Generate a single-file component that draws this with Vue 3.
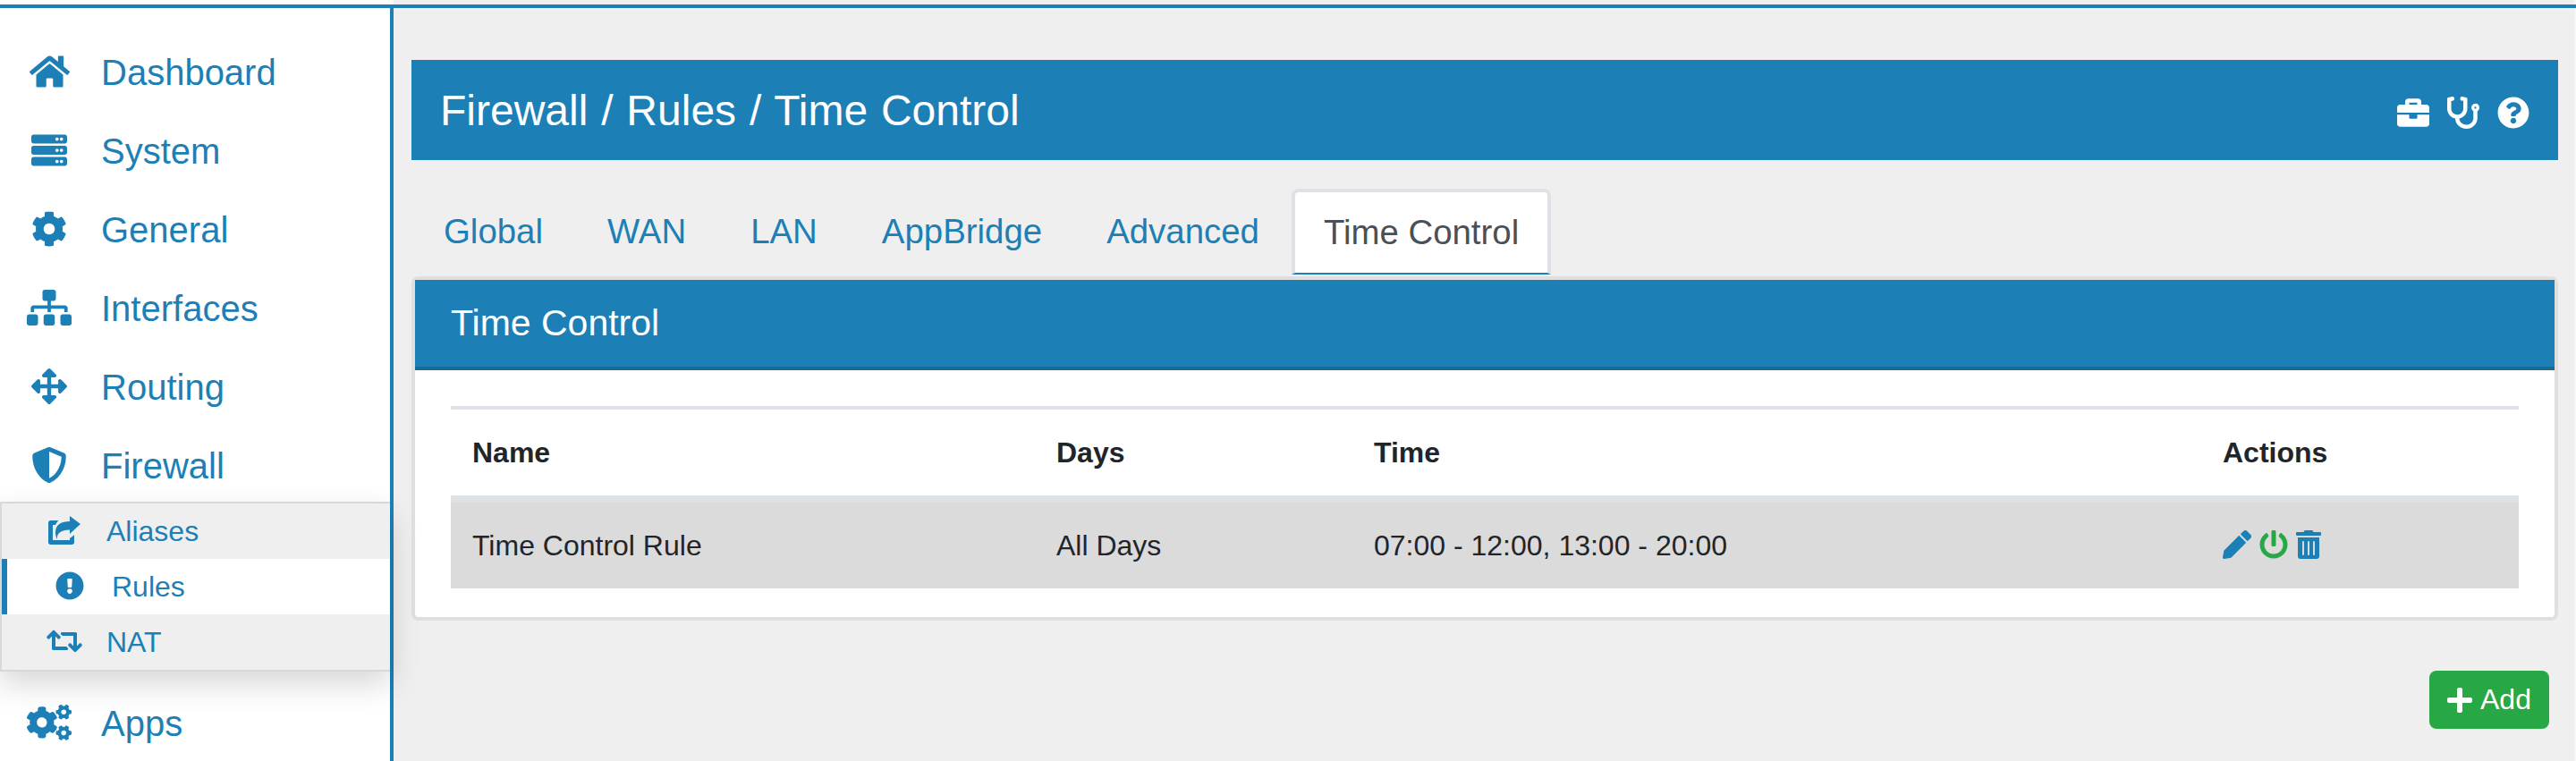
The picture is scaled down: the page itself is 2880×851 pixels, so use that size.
<script setup>
const paths = {
  home: { w: 576, d: ['M280.37 148.26L96 300.11V464a16 16 0 0 0 16 16l112.06-.29a16 16 0 0 0 15.92-16V368a16 16 0 0 1 16-16h64a16 16 0 0 1 16 16v95.64a16 16 0 0 0 16 16.05L464 480a16 16 0 0 0 16-16V300L295.67 148.26a12.19 12.19 0 0 0-15.3 0zM571.6 251.47L488 182.56V44.05a12 12 0 0 0-12-12h-56a12 12 0 0 0-12 12v72.61L318.47 43a48 48 0 0 0-61 0L4.34 251.47a12 12 0 0 0-1.6 16.9l25.5 31A12 12 0 0 0 45.15 301l235.22-193.74a12.19 12.19 0 0 1 15.3 0L530.9 301a12 12 0 0 0 16.9-1.6l25.5-31a12 12 0 0 0-1.7-16.93z'] },
  server: { w: 512, d: ['M480 160H32c-17.673 0-32-14.327-32-32V64c0-17.673 14.327-32 32-32h448c17.673 0 32 14.327 32 32v64c0 17.673-14.327 32-32 32zm-48-88c-13.255 0-24 10.745-24 24s10.745 24 24 24 24-10.745 24-24-10.745-24-24-24zm-64 0c-13.255 0-24 10.745-24 24s10.745 24 24 24 24-10.745 24-24-10.745-24-24-24zm112 248H32c-17.673 0-32-14.327-32-32v-64c0-17.673 14.327-32 32-32h448c17.673 0 32 14.327 32 32v64c0 17.673-14.327 32-32 32zm-48-88c-13.255 0-24 10.745-24 24s10.745 24 24 24 24-10.745 24-24-10.745-24-24-24zm-64 0c-13.255 0-24 10.745-24 24s10.745 24 24 24 24-10.745 24-24-10.745-24-24-24zm112 248H32c-17.673 0-32-14.327-32-32v-64c0-17.673 14.327-32 32-32h448c17.673 0 32 14.327 32 32v64c0 17.673-14.327 32-32 32zm-48-88c-13.255 0-24 10.745-24 24s10.745 24 24 24 24-10.745 24-24-10.745-24-24-24zm-64 0c-13.255 0-24 10.745-24 24s10.745 24 24 24 24-10.745 24-24-10.745-24-24-24z'] },
  cog: { w: 512, d: ['M487.4 315.7l-42.6-24.6c4.3-23.2 4.3-47 0-70.2l42.6-24.6c4.9-2.8 7.1-8.6 5.5-14-11.1-35.6-30-67.8-54.7-94.6-3.8-4.1-10-5.1-14.8-2.3L380.8 110c-17.9-15.4-38.5-27.3-60.8-35.1V25.8c0-5.6-3.9-10.5-9.4-11.7-36.7-8.2-74.3-7.8-109.2 0-5.5 1.2-9.4 6.1-9.4 11.7V75c-22.2 7.9-42.8 19.8-60.8 35.1L88.7 85.5c-4.9-2.8-11-1.9-14.8 2.3-24.7 26.7-43.6 58.9-54.7 94.6-1.7 5.4.6 11.2 5.5 14L67.3 221c-4.3 23.2-4.3 47 0 70.2l-42.6 24.6c-4.9 2.8-7.1 8.6-5.5 14 11.1 35.6 30 67.8 54.7 94.6 3.8 4.1 10 5.1 14.8 2.3l42.6-24.6c17.9 15.4 38.5 27.3 60.8 35.1v49.2c0 5.6 3.9 10.5 9.4 11.7 36.7 8.2 74.3 7.8 109.2 0 5.5-1.2 9.4-6.1 9.4-11.7v-49.2c22.2-7.9 42.8-19.8 60.8-35.1l42.6 24.6c4.9 2.8 11 1.9 14.8-2.3 24.7-26.7 43.6-58.9 54.7-94.6 1.5-5.5-.7-11.3-5.6-14.1zM256 336c-44.1 0-80-35.9-80-80s35.9-80 80-80 80 35.9 80 80-35.9 80-80 80z'] },
  sitemap: { w: 640, d: ['M128 352H32c-17.67 0-32 14.33-32 32v96c0 17.67 14.33 32 32 32h96c17.67 0 32-14.33 32-32v-96c0-17.67-14.33-32-32-32zm-24-80h192v48h48v-48h192v48h48v-57.59c0-21.17-17.23-38.41-38.41-38.41H344v-64h40c17.67 0 32-14.33 32-32V32c0-17.67-14.33-32-32-32H256c-17.67 0-32 14.33-32 32v96c0 17.67 14.33 32 32 32h40v64H94.41C73.23 224 56 241.23 56 262.41V320h48v-48zm264 80h-96c-17.67 0-32 14.33-32 32v96c0 17.67 14.33 32 32 32h96c17.67 0 32-14.33 32-32v-96c0-17.67-14.33-32-32-32zm240 0h-96c-17.67 0-32 14.33-32 32v96c0 17.67 14.33 32 32 32h96c17.67 0 32-14.33 32-32v-96c0-17.67-14.33-32-32-32z'] },
  arrows: { w: 512, d: ['M352.201 425.775l-79.196 79.196c-9.373 9.373-24.568 9.373-33.941 0l-79.196-79.196c-15.119-15.119-4.411-40.971 16.971-40.97h51.162L228 284H127.196v51.162c0 21.382-25.851 32.09-40.971 16.971L7.029 272.937c-9.373-9.373-9.373-24.569 0-33.941L86.225 159.8c15.119-15.119 40.971-4.411 40.971 16.971V228H228V127.196h-51.23c-21.382 0-32.09-25.851-16.971-40.971l79.196-79.196c9.373-9.373 24.568-9.373 33.941 0l79.196 79.196c15.119 15.119 4.411 40.971-16.971 40.971h-51.162V228h100.804v-51.162c0-21.382 25.851-32.09 40.97-16.971l79.196 79.196c9.373 9.373 9.373 24.569 0 33.941L425.773 352.2c-15.119 15.119-40.971 4.411-40.97-16.971V284H284v100.804h51.23c21.382 0 32.09 25.851 16.971 40.971z'] },
  shield: { w: 512, d: ['M466.5 83.7l-192-80a48.15 48.15 0 0 0-36.9 0l-192 80C27.7 91.1 16 108.6 16 128c0 198.5 114.5 335.7 221.5 380.3 11.8 4.9 25.1 4.9 36.9 0C360.1 472.6 496 349.3 496 128c0-19.4-11.7-36.9-29.5-44.3zM256.1 446.3l-.1-381 175.9 73.3c-3.3 151.4-82.1 261.1-175.8 307.7z'] },
  share: { w: 576, d: ['M576 144L384 0V96C240 96 128 150 128 290C128 340 140 380 160 416C150 330 200 250 384 248V320Z', 'M40 80C18 80 0 98 0 120V472C0 494 18 512 40 512H424C446 512 464 494 464 472V340L384 400V432H80V160H130C140 130 160 105 180 80Z'] },
  alert: { w: 512, d: ['M504 256c0 136.997-111.043 248-248 248S8 392.997 8 256C8 119.083 119.043 8 256 8s248 111.083 248 248zm-248 50c-25.405 0-46 20.595-46 46s20.595 46 46 46 46-20.595 46-46-20.595-46-46-46zm-43.673-165.346l7.418 136c.347 6.364 5.609 11.346 11.982 11.346h48.546c6.373 0 11.635-4.982 11.982-11.346l7.418-136c.375-6.874-5.098-12.654-11.982-12.654h-63.383c-6.884 0-12.356 5.78-11.981 12.654z'] },
  retweet: { w: 640, d: ['M629.657 343.598L528.971 444.284c-9.373 9.372-24.568 9.372-33.941 0L394.343 343.598c-9.373-9.373-9.373-24.569 0-33.941l10.823-10.823c9.562-9.562 25.133-9.34 34.419.492L480 342.118V160H292.451a24.005 24.005 0 0 1-16.971-7.029l-16-16C244.361 121.851 255.069 96 276.451 96H520c13.255 0 24 10.745 24 24v222.118l40.416-42.792c9.285-9.831 24.856-10.054 34.419-.492l10.823 10.823c9.372 9.372 9.372 24.569-.001 33.941zm-265.138 15.431A23.999 23.999 0 0 0 347.548 352H160V169.881l40.416 42.792c9.286 9.831 24.856 10.054 34.419.491l10.822-10.822c9.373-9.373 9.373-24.569 0-33.941L144.971 67.716c-9.373-9.373-24.569-9.373-33.941 0L10.343 168.402c-9.373 9.373-9.373 24.569 0 33.941l10.822 10.822c9.562 9.562 25.133 9.34 34.419-.491L96 169.881V392c0 13.255 10.745 24 24 24h243.549c21.382 0 32.09-25.851 16.971-40.971l-16.001-16z'] },
  cogs: { w: 640, d: ['M512.1 191l-8.2 14.3c-3 5.3-9.4 7.5-15.1 5.4-11.8-4.4-22.6-10.7-32.1-18.6-4.6-3.8-5.8-10.5-2.8-15.7l8.2-14.3c-6.9-8-12.3-17.3-15.9-27.4h-16.5c-6 0-11.2-4.3-12.2-10.3-2-12-2.1-24.6 0-37.1 1-6 6.2-10.4 12.2-10.4h16.5c3.6-10.1 9-19.4 15.9-27.4l-8.2-14.3c-3-5.2-1.9-11.9 2.8-15.7 9.5-7.9 20.4-14.2 32.1-18.6 5.7-2.1 12.1.1 15.1 5.4l8.2 14.3c10.5-1.9 21.2-1.9 31.7 0L552 6.3c3-5.3 9.4-7.5 15.1-5.4 11.8 4.4 22.6 10.7 32.1 18.6 4.6 3.8 5.8 10.5 2.8 15.7l-8.2 14.3c6.9 8 12.3 17.3 15.9 27.4h16.5c6 0 11.2 4.3 12.2 10.3 2 12 2.1 24.6 0 37.1-1 6-6.2 10.4-12.2 10.4h-16.5c-3.6 10.1-9 19.4-15.9 27.4l8.2 14.3c3 5.2 1.9 11.9-2.8 15.7-9.5 7.9-20.4 14.2-32.1 18.6-5.7 2.1-12.1-.1-15.1-5.4l-8.2-14.3c-10.4 1.9-21.2 1.9-31.7 0zm-10.5-58.8c38.5 29.6 82.4-14.3 52.8-52.8-38.5-29.7-82.4 14.3-52.8 52.8zM386.3 286.1l33.7 16.8c10.1 5.8 14.5 18.1 10.5 29.1-8.9 24.2-26.4 46.4-42.6 65.8-7.4 8.9-20.2 11.1-30.3 5.3l-29.1-16.8c-16 13.7-34.6 24.6-54.9 31.7v33.6c0 11.6-8.3 21.6-19.7 23.6-24.6 4.2-50.4 4.4-75.9 0-11.5-2-20-11.9-20-23.6V418c-20.3-7.2-38.9-18-54.9-31.7L74 403c-10 5.8-22.9 3.6-30.3-5.3-16.2-19.4-33.3-41.6-42.2-65.7-4-10.9.4-23.2 10.5-29.1l33.3-16.8c-3.9-20.9-3.9-42.4 0-63.4L12 205.8c-10.1-5.8-14.6-18.1-10.5-29 8.9-24.2 26-46.4 42.2-65.8 7.4-8.9 20.2-11.1 30.3-5.3l29.1 16.8c16-13.7 34.6-24.6 54.9-31.7V57.1c0-11.5 8.2-21.5 19.6-23.5 24.6-4.2 50.5-4.4 76-.1 11.5 2 20 11.9 20 23.6v33.6c20.3 7.2 38.9 18 54.9 31.7l29.1-16.8c10-5.8 22.9-3.6 30.3 5.3 16.2 19.4 33.2 41.6 42.1 65.8 4 10.9.1 23.2-10 29.1l-33.7 16.8c3.9 21 3.9 42.5 0 63.5zm-117.6 21.1c59.2-77-28.7-164.9-105.7-105.7-59.2 77 28.7 164.9 105.7 105.7zm243.4 182.7l-8.2 14.3c-3 5.3-9.4 7.5-15.1 5.4-11.8-4.4-22.6-10.7-32.1-18.6-4.6-3.8-5.8-10.5-2.8-15.7l8.2-14.3c-6.9-8-12.3-17.3-15.9-27.4h-16.5c-6 0-11.2-4.3-12.2-10.3-2-12-2.1-24.6 0-37.1 1-6 6.2-10.4 12.2-10.4h16.5c3.6-10.1 9-19.4 15.9-27.4l-8.2-14.3c-3-5.2-1.9-11.9 2.8-15.7 9.5-7.9 20.4-14.2 32.1-18.6 5.7-2.1 12.1.1 15.1 5.4l8.2 14.3c10.5-1.9 21.2-1.9 31.7 0l8.2-14.3c3-5.3 9.4-7.5 15.1-5.4 11.8 4.4 22.6 10.7 32.1 18.6 4.6 3.8 5.8 10.5 2.8 15.7l-8.2 14.3c6.9 8 12.3 17.3 15.9 27.4h16.5c6 0 11.2 4.3 12.2 10.3 2 12 2.1 24.6 0 37.1-1 6-6.2 10.4-12.2 10.4h-16.5c-3.6 10.1-9 19.4-15.9 27.4l8.2 14.3c3 5.2 1.9 11.9-2.8 15.7-9.5 7.9-20.4 14.2-32.1 18.6-5.7 2.1-12.1-.1-15.1-5.4l-8.2-14.3c-10.4 1.9-21.2 1.9-31.7 0zM501.6 431c38.5 29.6 82.4-14.3 52.8-52.8-38.5-29.6-82.4 14.3-52.8 52.8z'] },
  briefcase: { w: 512, d: ['M320 336c0 8.84-7.16 16-16 16h-96c-8.84 0-16-7.16-16-16v-48H0v144c0 25.6 22.4 48 48 48h416c25.6 0 48-22.4 48-48V288H320v48zm144-208h-80V80c0-25.6-22.4-48-48-48H176c-25.6 0-48 22.4-48 48v48H48c-25.6 0-48 22.4-48 48v80h512v-80c0-25.6-22.4-48-48-48zm-144 0H192V96h128v32z'] },
  steth: { w: 512, d: ['M447.1 112c-34.2.5-62.3 28.4-63 62.6-.5 24.3 12.5 45.6 32 56.8V344c0 57.3-50.2 104-112 104-60 0-109.2-44.1-111.9-99.2C265 333.8 320 269.2 320 192V36.6c0-11.4-8.1-21.3-19.3-23.5L237.8.5c-13-2.6-25.6 5.8-28.2 18.8L206.4 35c-2.6 13 5.8 25.6 18.8 28.2l30.7 6.1v121.4c0 52.9-42.2 96.7-95.1 97.2-53.4.5-96.9-42.7-96.9-96V69.4l30.7-6.1c13-2.6 21.4-15.2 18.8-28.2l-3.1-15.7C107.7 6.4 95.1-2 82.1.6L19.3 13C8.1 15.3 0 25.1 0 36.6V192c0 77.3 55.1 142 128.1 156.8C130.7 439.2 208.6 512 304 512c97 0 176-75.4 176-168V231.4c19.1-11.1 32-31.7 32-55.4 0-35.7-29.2-64.5-64.9-64zm.9 80c-8.8 0-16-7.2-16-16s7.2-16 16-16 16 7.2 16 16-7.2 16-16 16z'] },
  help: { w: 512, d: ['M504 256c0 136.997-111.043 248-248 248S8 392.997 8 256C8 119.083 119.043 8 256 8s248 111.083 248 248zM262.655 90c-54.497 0-89.255 22.957-116.549 63.758-3.536 5.286-2.353 12.415 2.715 16.258l34.699 26.31c5.205 3.947 12.621 3.008 16.665-2.122 17.864-22.658 30.113-35.797 57.303-35.797 20.429 0 45.698 13.148 45.698 32.958 0 14.976-12.363 22.667-32.534 33.976C247.128 238.528 216 254.941 216 296v4c0 6.627 5.373 12 12 12h56c6.627 0 12-5.373 12-12v-1.333c0-28.462 83.186-29.647 83.186-106.667 0-58.002-60.165-102-116.531-102zM256 338c-25.365 0-46 20.635-46 46 0 25.364 20.635 46 46 46s46-20.636 46-46c0-25.365-20.635-46-46-46z'] },
  pencil: { w: 512, d: ['M497.9 142.1l-46.1 46.1c-4.7 4.7-12.3 4.7-17 0l-111-111c-4.7-4.7-4.7-12.3 0-17l46.1-46.1c18.7-18.7 49.1-18.7 67.9 0l60.1 60.1c18.8 18.7 18.8 49.1 0 67.9z', 'M284.2 99.8L21.6 362.4.4 483.9c-2.9 16.4 11.4 30.6 27.8 27.8l121.5-21.3 262.6-262.6c4.7-4.7 4.7-12.3 0-17l-111-111c-4.8-4.7-12.4-4.7-17.1 0z'] },
  power: { w: 512, d: ['M400 54.1c63 45 104 118.6 104 201.9 0 136.8-110.8 247.7-247.5 248C120 504.3 8.2 393 8 256.4 7.9 173.1 48.9 99.3 111.8 54.2c11.7-8.3 28-4.8 35 7.7L162.6 90c5.9 10.5 3.1 23.8-6.6 31-41.5 30.8-68 79.6-68 134.9-.1 92.3 74.5 168.1 168 168.1 91.6 0 168.6-74.2 168-169.1-.3-51.8-24.7-101.8-68.1-134-9.7-7.2-12.4-20.5-6.5-30.9l15.8-28.1c7-12.4 23.2-16.1 34.8-7.8zM296 264V24c0-13.3-10.7-24-24-24h-32c-13.3 0-24 10.7-24 24v240c0 13.3 10.7 24 24 24h32c13.3 0 24-10.7 24-24z'] },
  trash: { w: 448, d: ['M32 464a48 48 0 0 0 48 48h288a48 48 0 0 0 48-48V128H32zm272-256a16 16 0 0 1 32 0v224a16 16 0 0 1-32 0zm-96 0a16 16 0 0 1 32 0v224a16 16 0 0 1-32 0zm-96 0a16 16 0 0 1 32 0v224a16 16 0 0 1-32 0zM432 32H312l-9.4-18.7A24 24 0 0 0 281.1 0H166.8a23.72 23.72 0 0 0-21.4 13.3L136 32H16A16 16 0 0 0 0 48v32a16 16 0 0 0 16 16h416a16 16 0 0 0 16-16V48a16 16 0 0 0-16-16z'] },
  plus: { w: 448, d: ['M416 208H272V64c0-17.67-14.33-32-32-32h-32c-17.67 0-32 14.33-32 32v144H32c-17.67 0-32 14.33-32 32v32c0 17.67 14.33 32 32 32h144v144c0 17.67 14.33 32 32 32h32c17.67 0 32-14.33 32-32V304h144c17.67 0 32-14.33 32-32v-32c0-17.67-14.33-32-32-32z'] },
}
const topItems = [
  { label: 'Dashboard', icon: paths.home },
  { label: 'System', icon: paths.server },
  { label: 'General', icon: paths.cog },
  { label: 'Interfaces', icon: paths.sitemap },
  { label: 'Routing', icon: paths.arrows },
  { label: 'Firewall', icon: paths.shield },
]
const subItems = [
  { label: 'Aliases', icon: paths.share, active: false },
  { label: 'Rules', icon: paths.alert, active: true },
  { label: 'NAT', icon: paths.retweet, active: false },
]
const tabs = ['Global', 'WAN', 'LAN', 'AppBridge', 'Advanced', 'Time Control']
const headIcons = [paths.briefcase, paths.steth, paths.help]
const box = (i) => `0 0 ${i.w} 512`
</script>

<template>
  <div class="page">
    <div class="strip"><div class="strip-left"></div></div>
    <div class="rule"></div>
    <div class="layout">
      <aside class="sidebar">
        <nav class="nav">
          <a v-for="it in topItems" :key="it.label" class="nav-item">
            <span class="nav-icon"><svg class="ico" :viewBox="box(it.icon)"><path v-for="d in it.icon.d" :key="d" :d="d" /></svg></span>
            <span class="nav-label">{{ it.label }}</span>
          </a>
        </nav>
        <div class="submenu">
          <a v-for="it in subItems" :key="it.label" class="sub-item" :class="{ active: it.active }">
            <span class="sub-icon"><svg class="ico" :viewBox="box(it.icon)"><path v-for="d in it.icon.d" :key="d" :d="d" /></svg></span>
            <span>{{ it.label }}</span>
          </a>
        </div>
        <a class="nav-item apps">
          <span class="nav-icon"><svg class="ico" :viewBox="box(paths.cogs)"><path :d="paths.cogs.d[0]" /></svg></span>
          <span class="nav-label">Apps</span>
        </a>
      </aside>
      <main class="main">
        <header class="title-bar">
          <h1 class="title">Firewall / Rules / Time Control</h1>
          <div class="title-icons">
            <svg v-for="(ic, n) in headIcons" :key="n" class="ico" :viewBox="box(ic)"><path :d="ic.d[0]" /></svg>
          </div>
        </header>
        <div class="tabs">
          <a v-for="t in tabs" :key="t" class="tab" :class="{ current: t === 'Time Control' }">{{ t }}</a>
        </div>
        <section class="panel">
          <h2 class="panel-head">Time Control</h2>
          <div class="panel-body">
            <table class="rules">
              <colgroup>
                <col class="c1" /><col class="c2" /><col class="c3" /><col />
              </colgroup>
              <thead>
                <tr><th>Name</th><th>Days</th><th>Time</th><th>Actions</th></tr>
              </thead>
              <tbody>
                <tr>
                  <td>Time Control Rule</td>
                  <td>All Days</td>
                  <td>07:00 - 12:00, 13:00 - 20:00</td>
                  <td>
                    <div class="actions">
                      <svg class="ico" :viewBox="box(paths.pencil)"><path v-for="d in paths.pencil.d" :key="d" :d="d" /></svg>
                      <svg class="ico green" :viewBox="box(paths.power)"><path :d="paths.power.d[0]" /></svg>
                      <svg class="ico" :viewBox="box(paths.trash)"><path :d="paths.trash.d[0]" /></svg>
                    </div>
                  </td>
                </tr>
              </tbody>
            </table>
          </div>
        </section>
        <div class="foot">
          <button class="add" type="button">
            <svg class="ico" :viewBox="box(paths.plus)"><path :d="paths.plus.d[0]" /></svg>
            <span>Add</span>
          </button>
        </div>
      </main>
    </div>
  </div>
</template>

<style>
html, body { margin: 0; background: #efefef; overflow: hidden; }
</style>

<style scoped>
.page {
  width: 2880px;
  height: 851px;
  overflow: hidden;
  display: flex;
  flex-direction: column;
  font-family: "Liberation Sans", Arial, sans-serif;
  background: #efefef;
  color: #212529;
}
.strip { height: 5px; flex: none; box-sizing: border-box; border-right: 2px solid #f6f6f6; }
.strip-left { width: 440px; height: 100%; background: #fff; }
.rule { height: 4px; flex: none; background: #1c80b7; }
.layout { flex: 1; min-height: 0; display: flex; }
.ico { display: block; height: 100%; fill: currentColor; }

.sidebar {
  width: 440px;
  flex: none;
  box-sizing: border-box;
  background: #fff;
  border-right: 4px solid #1c80b7;
  padding-top: 27px;
  color: #1c80b7;
}
.nav-item {
  height: 88px;
  display: flex;
  align-items: center;
  font-size: 40px;
  gap: 33px;
  padding-left: 30px;
}
.nav-label { padding-top: 2px; }
.nav-icon {
  width: 50px;
  height: 40px;
  display: flex;
  justify-content: center;
}
.submenu {
  position: relative;
  margin-top: -3px;
  background: #efefef;
  border: 2px solid #d8d8d8;
  border-right: 0;
  box-shadow: 0 14px 32px rgba(0, 0, 0, 0.16);
}
.sub-item {
  height: 62px;
  display: flex;
  align-items: center;
  font-size: 32px;
  padding-left: 50px;
  gap: 27px;
}
.sub-icon { width: 40px; height: 32px; margin-bottom: 2px; display: flex; justify-content: center; }
.sub-item.active {
  background: #fff;
  border-left: 6px solid #1c80b7;
}
.apps { margin-top: 13px; }

.main {
  flex: 1;
  min-width: 0;
  padding: 58px 18px 0 20px;
  box-sizing: border-box;
  border-right: 2px solid #f6f6f6;
}
.title-bar {
  height: 112px;
  background: #1c80b7;
  color: #fff;
  display: flex;
  align-items: center;
  justify-content: space-between;
  padding: 0 32px;
}
.title { margin: 0; font-size: 48px; font-weight: 400; word-spacing: 1.5px; }
.title-icons { display: flex; gap: 20px; height: 36px; margin-top: 6px; }

.tabs { display: flex; margin-top: 32px; height: 96px; }
.tab {
  box-sizing: border-box;
  display: flex;
  align-items: center;
  padding: 0 36px;
  font-size: 38.4px;
  color: #1c80b7;
}
.tab.current {
  padding: 0 32px;
  background: #fff;
  color: #495057;
  border: 4px solid #dee2e6;
  border-bottom: 2px solid #1c80b7;
  border-radius: 8px 8px 0 0;
}

.panel {
  margin-top: 2px;
  border: 4px solid #dfdfdf;
  border-radius: 8px;
  background: #fff;
}
.panel-head {
  margin: 0;
  height: 97px;
  box-sizing: content-box;
  background: #1c80b7;
  border-bottom: 4px solid #186a9a;
  color: #fff;
  font-size: 41px;
  font-weight: 400;
  line-height: 97px;
  padding-left: 40px;
}
.panel-body { padding: 40px 40px 32px; }
.rules {
  width: 100%;
  table-layout: fixed;
  border-collapse: separate;
  border-spacing: 0;
  font-size: 32px;
  color: #212529;
}
.c1 { width: 653px; }
.c2 { width: 355px; }
.c3 { width: 949px; }
th {
  height: 96px;
  padding: 0 24px;
  border-top: 4px solid #dee2e6;
  text-align: left;
  font-weight: 700;
}
td {
  height: 96px;
  padding: 0 24px;
  border-top: 8px solid #dee2e6;
  background: #dbdbdb;
}
.actions { display: flex; gap: 9px; height: 32px; margin-bottom: 2px; color: #1c80b7; }
.green { color: #28a745; }

.foot { display: flex; justify-content: flex-end; margin-top: 56px; padding-right: 10px; }
.add {
  width: 134px;
  height: 65px;
  box-sizing: border-box;
  padding: 0 0 0 20px;
  border: 0;
  border-radius: 8px;
  background: #28a745;
  color: #fff;
  font: inherit;
  font-size: 32px;
  display: flex;
  align-items: center;
  gap: 9px;
}
.add .ico { height: 32px; }
</style>
